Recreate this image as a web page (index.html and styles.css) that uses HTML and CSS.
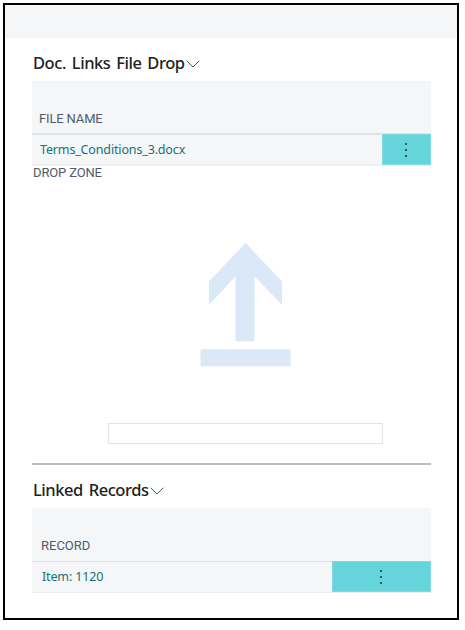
FILE: index.html
```html
<!DOCTYPE html>
<html lang="en">
<head>
<meta charset="utf-8">
<title>Doc. Links</title>
<link rel="stylesheet" href="styles.css">
</head>
<body>
<main class="pane">
  <div class="pane-top"></div>
  <section class="part files">
    <h2 class="title"><span class="title-text">Doc. Links File Drop</span><svg class="chevron" width="14" height="8" viewBox="0 0 14 8"><path d="M.7.8 7 7 13.3.8"/></svg></h2>
    <div class="head"><span class="label">FILE NAME</span></div>
    <div class="row">
      <a class="link">Terms_Conditions_3.docx</a>
      <div class="more"><i></i><i></i><i></i></div>
    </div>
    <div class="zone-label"><span class="label">DROP ZONE</span></div>
    <div class="zone">
      <svg class="upload" width="92" height="125" viewBox="0 0 92 125"><path d="M45.5 1 82 39.5v23.3L54.5 34.5v64.8h-19V34.5L9 62.8V39.5zM.5 107.3h90v17H.5z"/></svg>
      <div class="field"></div>
    </div>
  </section>
  <section class="part records">
    <h2 class="title"><span class="title-text">Linked Records</span><svg class="chevron" width="14" height="8" viewBox="0 0 14 8"><path d="M.7.8 7 7 13.3.8"/></svg></h2>
    <div class="head"><span class="label">RECORD</span></div>
    <div class="row">
      <a class="link">Item: 1120</a>
      <div class="more"><i></i><i></i><i></i></div>
    </div>
  </section>
</main>
</body>
</html>
```
FILE: styles.css
```css
* { box-sizing: border-box; }
body { margin: 0; padding: 3px; background: #fff; font-family: "Noto Sans", sans-serif; }
.pane { width: 456px; height: 617px; border: 2px solid #000; }
.pane-top { height: 33px; background: #f5f6f8; }
.part { margin-left: 27px; width: 399px; }
.title { margin: 0; height: 43px; padding: 13px 0 0 1px; display: flex; align-items: flex-start; font-size: 16.5px; line-height: 24px; font-weight: 500; letter-spacing: -0.45px; word-spacing: 2px; color: #212121; white-space: nowrap; }
.chevron { margin: 9px 0 0 1px; fill: none; stroke: #555; stroke-width: 1; }
.head { height: 52px; padding: 29px 0 0 7px; background: #f5f6f8; line-height: 18px; }
.label { display: block; font-family: Roboto, sans-serif; font-size: 13px; line-height: 18px; letter-spacing: -0.15px; color: #505c6d; white-space: nowrap; }
.row { height: 33px; display: flex; justify-content: space-between; background: #f5f6f8; border-top: 2px solid #e0e3e5; border-bottom: 2px solid #eceeef; }
.link { padding-left: 8px; font-size: 12.5px; line-height: 29px; letter-spacing: -0.15px; color: #15717a; white-space: nowrap; }
.more { width: 49px; height: 31px; margin-top: -1px; padding: 8px 1px 0 0; background: #66d4db; border: 1px solid #7fdbe1; display: flex; flex-direction: column; align-items: center; gap: 4px; }
.more i { width: 2px; height: 2px; background: #265e62; }
.zone-label { height: 18px; margin-top: -2px; padding-left: 1px; }
.zone { height: 281px; padding-top: 60px; display: flex; flex-direction: column; align-items: center; }
.upload { margin-right: -28px; fill: #dbe8f7; }
.field { width: 275px; height: 21px; margin: 56px 0 0 28px; border: 1px solid #e3e3e3; }
.records { border-top: 2px solid #bcc0c5; }
.records .head { height: 53px; padding-left: 9px; }
.records .label { letter-spacing: 0; }
.records .row { height: 32px; border-width: 1px; }
.records .link { padding-left: 10px; line-height: 30px; }
.records .more { width: 99px; }
```
